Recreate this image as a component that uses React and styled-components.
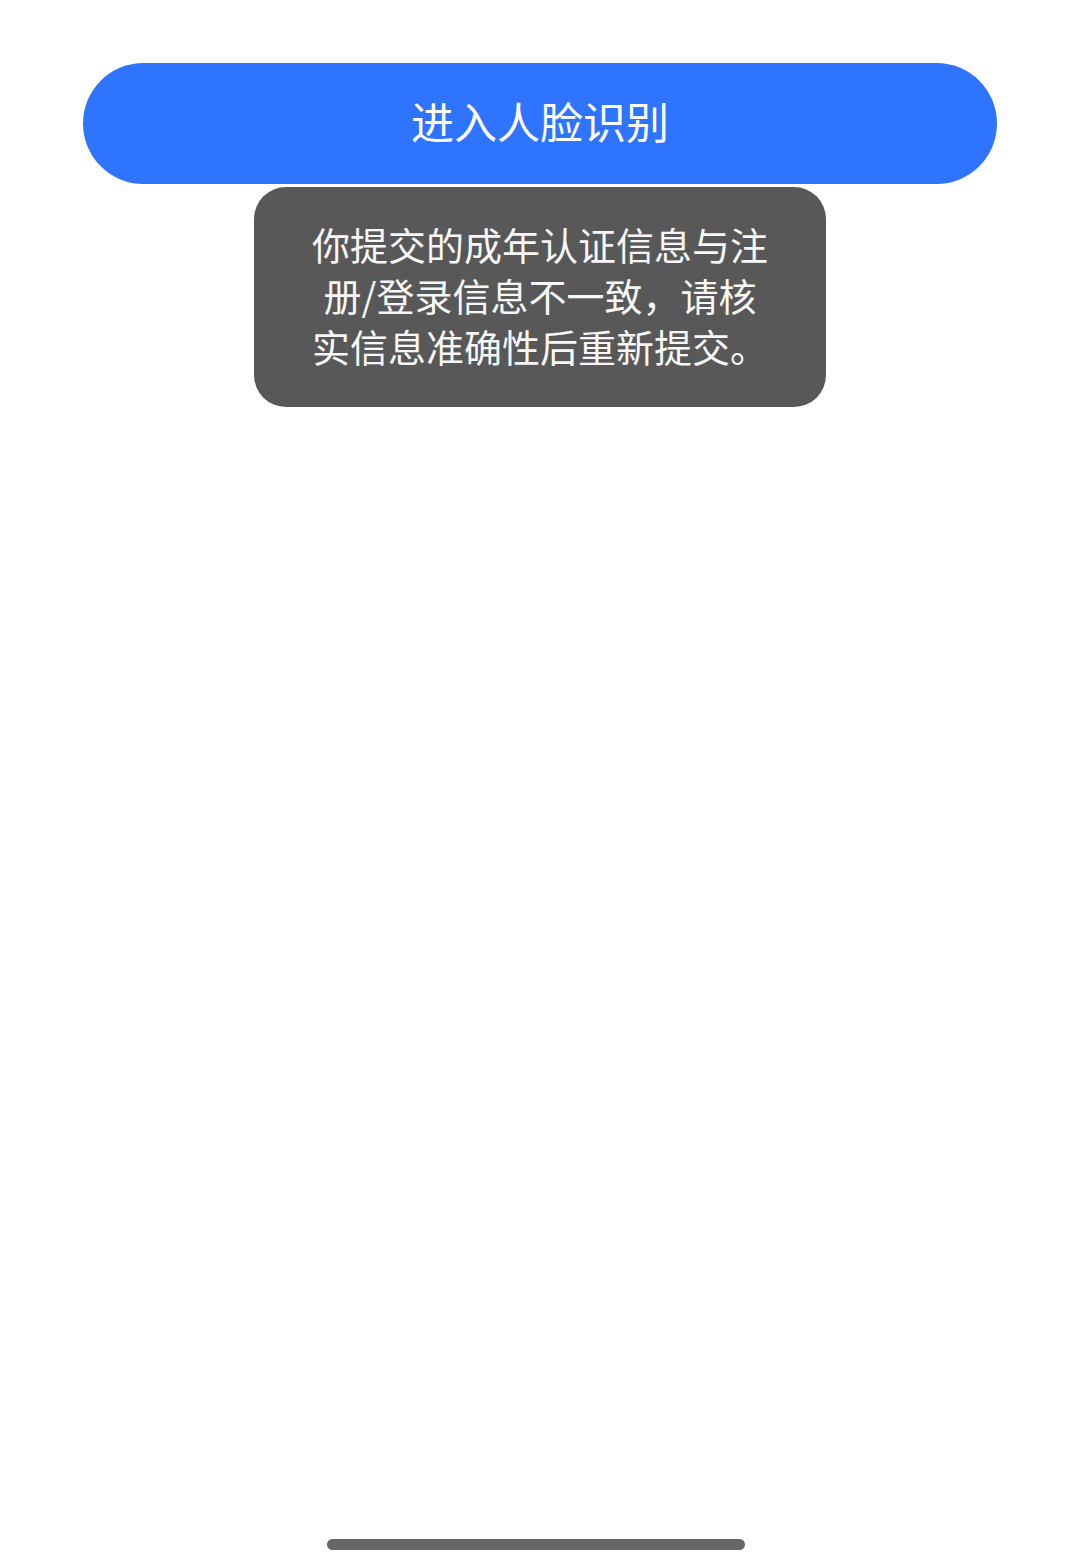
import React from 'react';
import styled, { createGlobalStyle } from 'styled-components';

const GlobalStyles = createGlobalStyle`
  html, body {
    margin: 0;
    padding: 0;
    background: #ffffff;
    font-family: "Noto Sans CJK SC", "Noto Sans", sans-serif;
  }
`

const Screen = styled.div`
  min-height: 1566px;
  box-sizing: border-box;
  padding: 63px 0 16px 83px;
  display: flex;
  flex-direction: column;
`

const PrimaryButton = styled.button`
  width: 914px;
  height: 121px;
  border: none;
  border-radius: 61px;
  background: #2e74ff;
  color: #ffffff;
  font-family: inherit;
  font-size: 43px;
  display: flex;
  align-items: center;
  justify-content: center;
  padding: 0 0 7px;
  cursor: pointer;
`

const Toast = styled.div`
  margin: 3px 0 0 171px;
  width: 572px;
  height: 220px;
  box-sizing: border-box;
  padding-bottom: 5px;
  border-radius: 32px;
  background: #585858;
  color: #f7f7f7;
  font-size: 38px;
  line-height: 51px;
  text-align: center;
  display: flex;
  flex-direction: column;
  justify-content: center;
  align-items: center;
`

const ToastLine = styled.div`
  white-space: nowrap;
`

const HomeIndicator = styled.div`
  margin: auto 0 0 244px;
  width: 418px;
  height: 11px;
  border-radius: 6px;
  background: #666666;
`

const message = [
  '你提交的成年认证信息与注',
  '册/登录信息不一致，请核',
  '实信息准确性后重新提交。',
]

function App() {
  return (
    <>
      <GlobalStyles />
      <Screen>
        <PrimaryButton>进入人脸识别</PrimaryButton>
        <Toast>
          {message.map((line) => (
            <ToastLine key={line}>{line}</ToastLine>
          ))}
        </Toast>
        <HomeIndicator />
      </Screen>
    </>
  )
}

export default App;
